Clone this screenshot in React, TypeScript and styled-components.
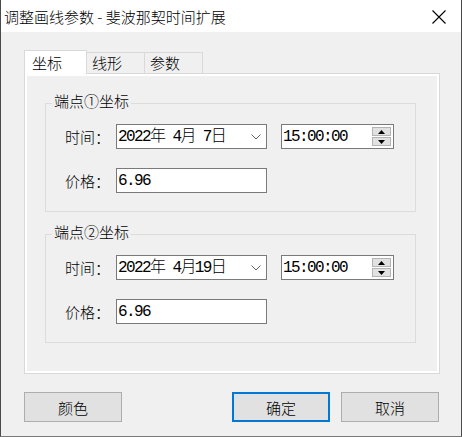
import * as React from 'react'
import styled, { createGlobalStyle } from 'styled-components'

const GlobalStyle = createGlobalStyle`
  html, body {
    margin: 0;
    padding: 0;
    background: #fff;
  }
  body {
    font-family: "Noto Sans CJK SC", "Noto Sans", sans-serif;
    font-weight: 300;
    color: #000;
  }
  * {
    box-sizing: border-box;
  }
`

const Window = styled.div`
  width: 462px;
  height: 437px;
  display: flex;
  flex-direction: column;
  background: #f0f0f0;
  border-left: 1px solid #4a4a4a;
  border-right: 1px solid #4a4a4a;
  border-bottom: 1px solid #7a7a7a;
`

const TitleBar = styled.div`
  height: 32px;
  flex: none;
  display: flex;
  align-items: center;
  justify-content: space-between;
  padding: 2px 15px 0 3px;
  background: #fff;
  font-size: 15px;
  line-height: 20px;
`

const Body = styled.div`
  flex: 1;
  display: flex;
  flex-direction: column;
  padding: 18px 21px 14px 23px;
`

const TabStrip = styled.div`
  display: flex;
  align-items: flex-end;
  height: 23px;
`

const Tab = styled.div<{ $active?: boolean; $w: number }>`
  position: relative;
  z-index: ${p => (p.$active ? 1 : 0)};
  width: ${p => p.$w}px;
  height: ${p => (p.$active ? 24 : 21)}px;
  margin-bottom: ${p => (p.$active ? -1 : 0)}px;
  display: flex;
  align-items: center;
  padding-left: ${p => (p.$active ? 7 : 5)}px;
  border: 1px solid #d9d9d9;
  border-bottom: none;
  background: ${p => (p.$active ? '#fff' : '#f0f0f0')};
  font-size: 15px;
  line-height: 20px;

  & + & {
    margin-left: -1px;
  }
`

const Panel = styled.div`
  height: 301px;
  display: flex;
  flex-direction: column;
  padding: 29px 23px 0 20px;
  border: 1px solid #d9d9d9;
  box-shadow: inset 0 0 0 2px #fff;
`

const Group = styled.div`
  display: flex;
  flex-direction: column;
  padding: 0 0 18px 19px;
  border: 1px solid #dcdcdc;

  & + & {
    margin-top: 22px;
  }
`

const Caption = styled.div`
  align-self: flex-start;
  margin: -13px 0 0 -13px;
  padding: 0 2px;
  background: #f0f0f0;
  font-size: 15px;
  line-height: 19px;
`

const Rows = styled.div`
  display: flex;
  flex-direction: column;
  gap: 19px;
  margin-top: 14px;
`

const Row = styled.div`
  display: flex;
  align-items: center;
  height: 25px;
`

const Label = styled.div`
  width: 51px;
  font-size: 15px;
  line-height: 20px;
`

const Field = styled.div<{ $w: number; $gap?: number }>`
  width: ${p => p.$w}px;
  height: 25px;
  margin-left: ${p => p.$gap ?? 0}px;
  display: flex;
  align-items: center;
  justify-content: space-between;
  padding-left: 1px;
  border: 1px solid #7a7a7a;
  background: #fff;
`

const Mono = styled.span`
  font-family: "Liberation Mono", "Noto Sans CJK SC", monospace;
  font-size: 16px;
  letter-spacing: -1.6px;
  line-height: 20px;
  white-space: pre;
`

const Chevron = styled.svg`
  margin-right: 5px;
`

const Spin = styled.div`
  display: flex;
  flex-direction: column;
  gap: 1px;
  margin-right: 2px;
`

const SpinButton = styled.div`
  width: 19px;
  height: 9px;
  display: flex;
  align-items: center;
  justify-content: center;
  background: #e1e1e1;
  border: 1px solid #b4b4b4;
`

const Footer = styled.div`
  display: flex;
  justify-content: space-between;
  margin-top: 18px;
  padding-right: 1px;
`

const ButtonGroup = styled.div`
  display: flex;
  gap: 11px;
`

const Button = styled.button<{ $primary?: boolean }>`
  width: 98px;
  height: 30px;
  padding: 0;
  background: #e1e1e1;
  border: ${p => (p.$primary ? '2px solid #0078d7' : '1px solid #adadad')};
  font-family: "Noto Sans CJK SC", sans-serif;
  font-weight: 300;
  font-size: 15px;
  color: #000;
`

const CloseIcon = () => (
  <svg width="14" height="14" viewBox="0 0 14 14">
    <path d="M0.5 0.5 L13.5 13.5 M13.5 0.5 L0.5 13.5" stroke="#000" strokeWidth="1.1" fill="none" />
  </svg>
)

const Arrow: React.FC<{ up?: boolean }> = ({ up }) => (
  <svg width="7" height="4" viewBox="0 0 7 4">
    <path d={up ? 'M3.5 0 L7 4 L0 4 Z' : 'M0 0 L7 0 L3.5 4 Z'} fill="#000" />
  </svg>
)

interface EndpointProps {
  title: string
  date: string
}

const Endpoint: React.FC<EndpointProps> = ({ title, date }) => (
  <Group>
    <Caption>{title}</Caption>
    <Rows>
      <Row>
        <Label>时间：</Label>
        <Field $w={151}>
          <Mono>{date}</Mono>
          <Chevron width="10" height="6" viewBox="0 0 10 6">
            <path d="M0.5 0.5 L5 5 L9.5 0.5" stroke="#606060" fill="none" />
          </Chevron>
        </Field>
        <Field $w={113} $gap={14}>
          <Mono>15:00:00</Mono>
          <Spin>
            <SpinButton>
              <Arrow up />
            </SpinButton>
            <SpinButton>
              <Arrow />
            </SpinButton>
          </Spin>
        </Field>
      </Row>
      <Row>
        <Label>价格：</Label>
        <Field $w={151}>
          <Mono>6.96</Mono>
        </Field>
      </Row>
    </Rows>
  </Group>
)

const App: React.FC = () => (
  <>
    <GlobalStyle />
    <Window>
      <TitleBar>
        <span>调整画线参数 - 斐波那契时间扩展</span>
        <CloseIcon />
      </TitleBar>
      <Body>
        <TabStrip>
          <Tab $active $w={63}>坐标</Tab>
          <Tab $w={59}>线形</Tab>
          <Tab $w={59}>参数</Tab>
        </TabStrip>
        <Panel>
          <Endpoint title="端点①坐标" date="2022年 4月 7日" />
          <Endpoint title="端点②坐标" date="2022年 4月19日" />
        </Panel>
        <Footer>
          <Button>颜色</Button>
          <ButtonGroup>
            <Button $primary>确定</Button>
            <Button>取消</Button>
          </ButtonGroup>
        </Footer>
      </Body>
    </Window>
  </>
)

export default App
